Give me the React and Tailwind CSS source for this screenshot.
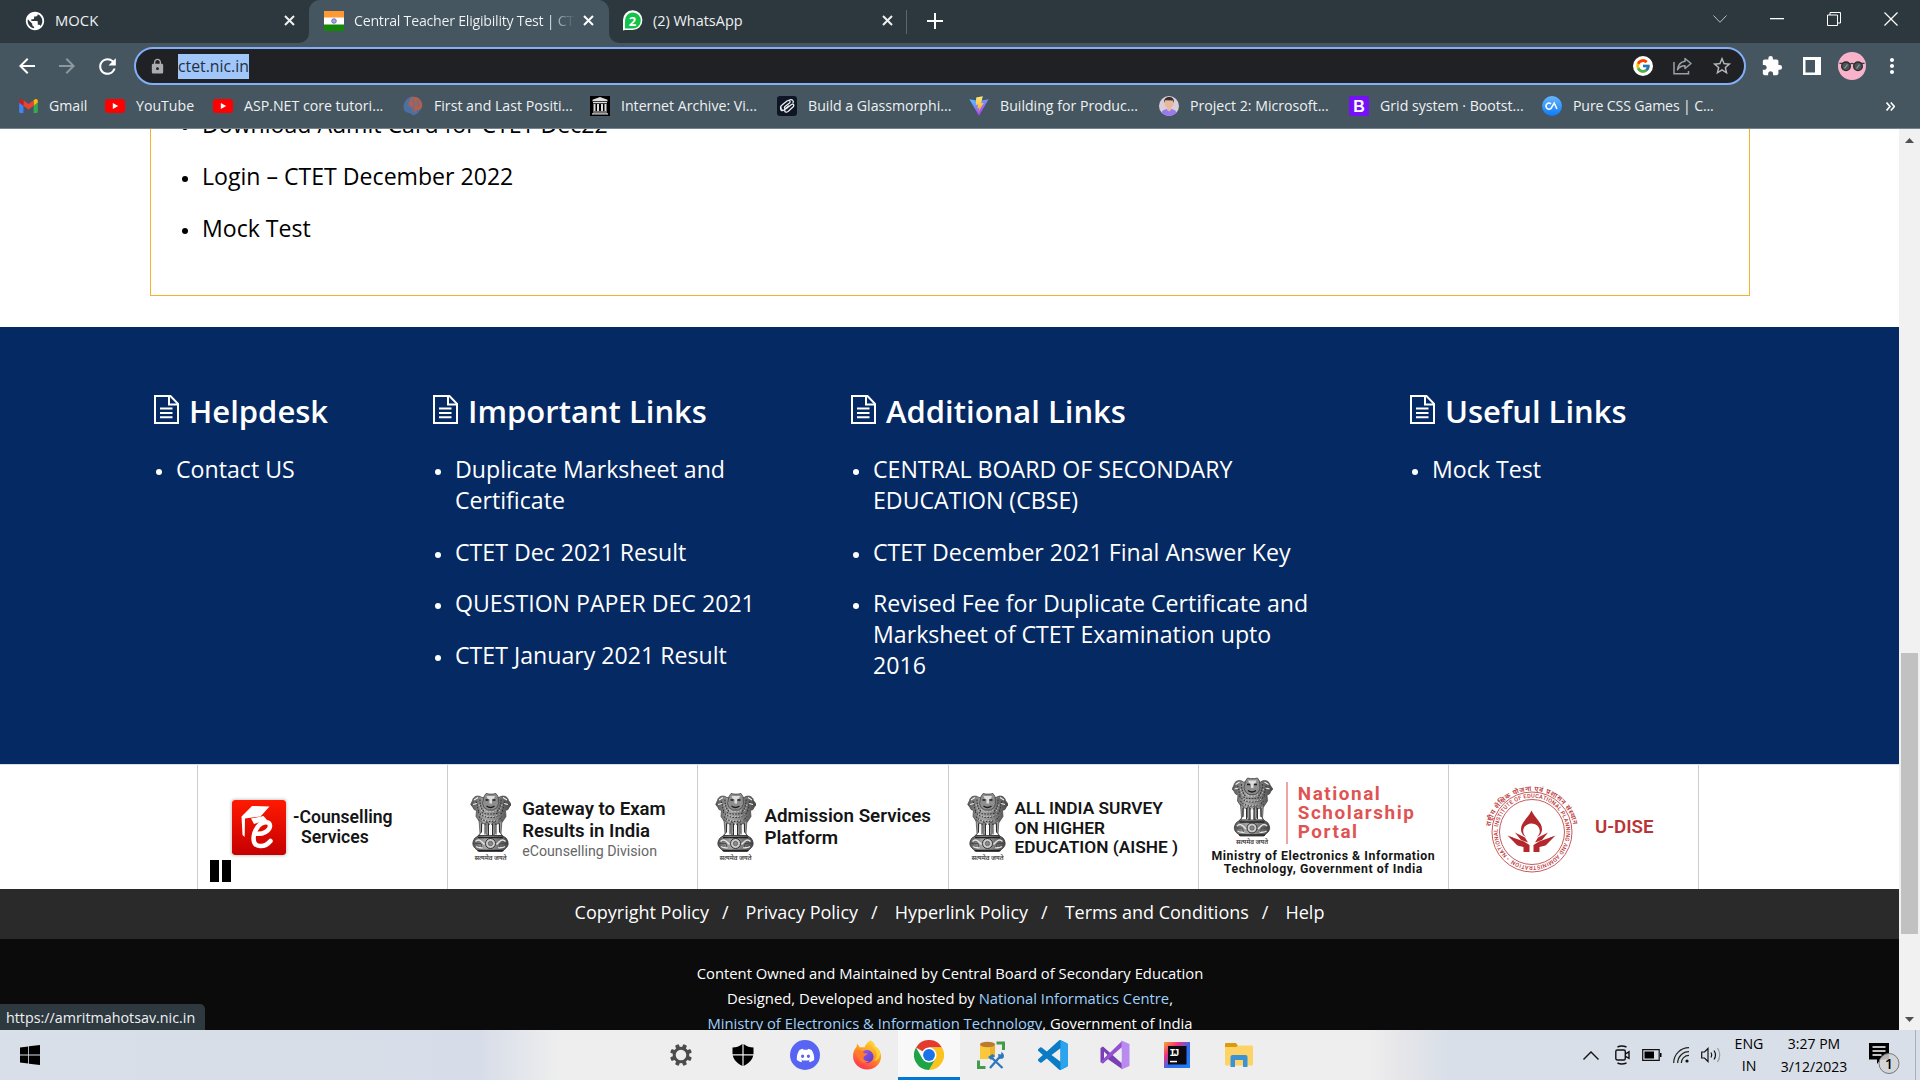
import { useId } from "react";
import { MdArrowBack, MdArrowForward, MdExtension, MdLock, MdMoreVert, MdPublic, MdRefresh, MdStarBorder } from "react-icons/md";
import { FcGoogle } from "react-icons/fc";
import { FaDiscord } from "react-icons/fa";

/* ---------- browser icons ---------- */

const Cross = ({ className = "size-[11px]" }) => (
  <svg viewBox="0 0 11 11" className={className} stroke="currentColor" strokeWidth="2" fill="none">
    <path d="M1 1l9 9M10 1l-9 9" />
  </svg>
);

const FlagIcon = () => (
  <svg viewBox="0 0 20 20" className="size-5">
    <path fill="#ff9933" d="M0 0h20v7H0z" />
    <path fill="#fff" d="M0 6.500h20V14H0z" />
    <path fill="#138808" d="M0 13.500h20V20H0z" />
    <circle cx="10" cy="10" r="2.300" fill="#aaaadd" stroke="#5a5ab4" strokeWidth=".8" />
  </svg>
);

const WhatsAppIcon = () => (
  <svg viewBox="0 0 21 21" className="size-[21px]">
    <path fill="#fff" d="M1 20.500V10.500A9.700 9.900 0 1 1 10.500 20H3z" />
    <path fill="#14c24a" d="M3 18.500V10.500A7.900 8 0 1 1 10.500 18.500z" />
    <text x="10.500" y="15.500" textAnchor="middle" fontFamily="Open Sans" fontWeight="700" fontSize="13" fill="#fff">2</text>
  </svg>
);

const GmailIcon = () => (
  <svg viewBox="52 42 88 66" className="h-[14px] w-[19px]">
    <path fill="#4285f4" d="M58 108h14V74L52 59v43c0 3.320 2.690 6 6 6" />
    <path fill="#34a853" d="M120 108h14c3.320 0 6-2.690 6-6V59l-20 15" />
    <path fill="#fbbc04" d="M120 48v26l20-15v-8c0-7.420-8.470-11.650-14.400-7.200" />
    <path fill="#ea4335" d="M72 74V48l24 18 24-18v26L96 92" />
    <path fill="#c5221f" d="M52 51v8l20 15V48l-5.600-4.200c-5.940-4.450-14.400-.22-14.400 7.200" />
  </svg>
);

const YouTubeIcon = () => (
  <svg viewBox="0 0 20 14" className="h-[14px] w-5">
    <rect width="20" height="14" rx="3" fill="#f00" />
    <path fill="#fff" d="M7.800 4l5.400 3-5.400 3z" />
  </svg>
);

const BrainIcon = () => (
  <svg viewBox="0 0 20 20" className="size-5">
    <path fill="#4a6fa0" d="M9 .5C5 1 1 5 .5 10s3 7 6 7l4 2.500 4-2 3-4 .5-7L15 2z" />
    <path fill="#b0604f" d="M8 1.500c4-2.500 10 1 11 5.500.8 4-.5 7-4 7-3 0-1 3-4 2-2.500-1-1-4-3-5S5 9 6 6z" />
    <path fill="none" stroke="#5f6f9c" strokeWidth="1.200" d="M10 2c-2 4 4 4 1 8s3 5 1 8M15 4c-2 2 2 4 0 6M4 6c3 1 0 4 2 6" />
  </svg>
);

const ArchiveIcon = () => (
  <svg viewBox="0 0 20 20" className="size-5">
    <path d="M0 0h20v20H0z" fill="#000" />
    <path fill="#ddd" d="M10 1l7.500 2.800v1.400h-15V3.800zM3 6h14v1.200H3zM3.500 8h2v7h-2zM7 8h2v7H7zM11 8h2v7h-2zM14.500 8h2v7h-2zM3 15.500h14v1H3zM2 17.200h16v1.300H2z" />
  </svg>
);

const KnotIcon = () => (
  <svg viewBox="0 0 20 20" className="size-5">
    <rect width="20" height="20" rx="3" fill="#0e1626" />
    <g fill="none" stroke="#eceef2" strokeWidth="1.300" strokeLinecap="round" strokeLinejoin="round">
      <path d="M5 13.500c-2.500-1.500-1.500-3.500 0-4.500l5-4c2.500-1.500 4 .5 2.500 2L8 10.500c-1.500 1.500.5 3 2 1.500l4.500-3.500c1.500-1 3 .5 2 2L11 15.500c-2 1.500-4 0-3-1.500" />
      <path d="M12.500 4c3-1 4.500 1 3.500 3M4 11c-1.500 3 1 4.500 3 3l4.500-4" />
    </g>
  </svg>
);

const ViteIcon = () => (
  <svg viewBox="0 0 20 20" className="size-5">
    <defs>
      <linearGradient id="vite" x1="0" y1="0" x2=".6" y2="1"><stop stopColor="#41d1ff" /><stop offset="1" stopColor="#bd34fe" /></linearGradient>
      <linearGradient id="bolt" x1="0" y1="0" x2="0" y2="1"><stop stopColor="#ffea83" /><stop offset="1" stopColor="#ffa800" /></linearGradient>
    </defs>
    <path fill="url(#vite)" d="M.4 3.200l9.600 16.500 9.600-16.500-9.600 1.800z" />
    <path fill="url(#bolt)" d="M13.800.3L7.200 1.600 6.800 9l2.400-.4-.9 4 2.100-.6-1.300 4.500L14.600 7l-2.500.3z" />
  </svg>
);

const PersonIcon = () => (
  <svg viewBox="0 0 20 20" className="size-5">
    <clipPath id="person"><circle cx="10" cy="10" r="10" /></clipPath>
    <g clipPath="url(#person)">
      <path fill="#d9cfd8" d="M0 0h20v20H0z" />
      <path fill="#9a78f0" d="M2 20c0-6 3-7 8-7s8 1 8 7z" />
      <circle cx="10" cy="7.500" r="4.500" fill="#e8b89c" />
      <path fill="#3d2f33" d="M5.200 7C4.500 2 8 .8 11 1s4.500 3 3.800 6l-1-2.500-7.500-.3z" />
      <path fill="#e8b89c" d="M8 11h4v3l-2 1.500L8 14z" />
    </g>
  </svg>
);

const BootstrapIcon = () => (
  <svg viewBox="0 0 20 20" className="size-5">
    <rect width="20" height="20" rx="2" fill="#7611f7" />
    <text x="10" y="15.700" textAnchor="middle" fontFamily="Liberation Sans" fontWeight="700" fontSize="16" fill="#fff">B</text>
  </svg>
);

const CodingArtistIcon = () => (
  <svg viewBox="0 0 20 20" className="size-5">
    <linearGradient id="cag" x1="0" y1="0" x2="0" y2="1"><stop stopColor="#6ab6fb" /><stop offset="1" stopColor="#0b7bfa" /></linearGradient>
    <circle cx="10" cy="10" r="10" fill="url(#cag)" />
    <path fill="none" stroke="#fff" strokeWidth="1.500" d="M9 7.800a3 3 0 1 0 0 4.600L12.200 7l2.800 6" />
  </svg>
);

const ShareIcon = () => (
  <svg viewBox="0 0 19 18" className="h-[18px] w-[19px]" fill="none" stroke="#9aa0a6" strokeWidth="1.500">
    <path d="M1 5v11.800h14.500V14" />
    <path strokeLinejoin="round" d="M12 1.500l6 5-6 5V8.800c-4 0-6 1.200-7.500 4C5 8.500 7.500 5 12 4.300z" />
  </svg>
);

const AvatarIcon = () => (
  <svg viewBox="0 0 28 28" className="size-7">
    <circle cx="14" cy="14" r="14" fill="#f8b3cb" />
    <path fill="none" stroke="#3a3a3a" strokeWidth="1.300" d="M1.500 11.300h4M22.500 11.300h4M12 12.200q2-1.500 4 0" />
    <circle cx="8" cy="14.300" r="4.300" fill="#4a5558" stroke="#2c2c2c" strokeWidth="1.400" />
    <circle cx="20" cy="14.300" r="4.300" fill="#4a5558" stroke="#2c2c2c" strokeWidth="1.400" />
    <path stroke="#93a0a3" strokeWidth="1.200" d="M6.500 16.500l3-4M18.500 16.500l3-4" />
  </svg>
);

/* ---------- page artwork ---------- */

const FileIcon = () => (
  <svg viewBox="0 0 25 29" className="h-[29px] w-[25px] shrink-0" fill="none" stroke="#fff" strokeWidth="2">
    <path d="M1 1h15.500L24 8.800V28H1z" />
    <path d="M15 1v8.500h9" />
    <path d="M6 13.500h12.500M6 18h12.500M6 22.300h12.500" />
  </svg>
);

const Emblem = ({ className }) => {
  const id = useId();
  return (
    <svg viewBox="0 0 41 68" className={className}>
      <linearGradient id={id} x1="0" x2="1" y1="0" y2="0">
        <stop stopColor="#555" /><stop offset=".35" stopColor="#a5a5a5" /><stop offset=".6" stopColor="#8a8a8a" /><stop offset="1" stopColor="#444" />
      </linearGradient>
      {/* side lions */}
      <path fill={`url(#${id})`} stroke="#444" strokeWidth=".7" d="M12 5C8 2 3 4 2.500 8L.7 12l2 2.500L4 17l2.500 1L6 24l4 6 6 2h10l6-2 4-6-.5-6 2.500-1 1.300-2.500 2-2.500L38.500 8C38 4 33 2 29 5z" />
      {/* front lion */}
      <path fill="#8e8e8e" stroke="#444" strokeWidth=".8" d="M14 4l2-3 3 .6h4L26 1l2 3 .5 7-1.500 4-3.500 2.500h-6L14 15l-1.500-4z" />
      <path fill="#ddd" d="M16.500 3.500h8.500l-1 2.500-2 1v4h-2.500V7l-2-1z" />
      <path stroke="#1d1d1d" strokeWidth="1.400" fill="none" d="M15.500 7.500h3M22.500 7.500h3M16.500 13.500q4 3 8 0" />
      <path stroke="#f0f0f0" strokeWidth="1.100" fill="none" d="M4 7.500l4-2.500M37 7.500L33 5M3 12l4-1M38 12l-4-1" />
      <path stroke="#333" strokeWidth="1.100" fill="none" strokeDasharray="1.600 1.200" d="M6 9c2 3 1 7 3 10M35 9c-2 3-1 7-3 10M10 7c0 5 1 9 4 12M31 7c0 5-1 9-4 12M8 19c3 4 7 6 12.500 6S30 23 33 19M9 24c3 4 7 5 11.500 5s9-1 11.500-5M12 20c3 2 14 2 17 0" />
      <path stroke="#ddd" strokeWidth=".8" fill="none" strokeDasharray="1.300 1.700" d="M9 12c1 4 2 6 4 8M32 12c-1 4-2 6-4 8M11 22c4 3 14 3 19 0M12 27c4 2 13 2 17 0M14 17c3 3 10 3 13 0" />
      {/* legs */}
      <path fill="#9b9b9b" stroke="#444" strokeWidth=".7" d="M9 27l3 3-.5 9-2.500 4h8l-1-3V30h2l.5 10-.5 4h5l-.5-4 .5-10h2v10l-1 3h8l-2.500-4-.5-9 3-3-1 14 2.500 4h-27L10 41z" />
      <path stroke="#2e2e2e" strokeWidth="1" fill="none" d="M11.500 31v9M15 31v11M18.500 31v12M22.500 31v12M26 31v11M29.500 31v9" />
      <path stroke="#f4f4f4" strokeWidth="1.200" fill="none" d="M13.300 32v8M20.500 31v11M27.800 32v8" />
      {/* abacus */}
      <path fill={`url(#${id})`} stroke="#333" strokeWidth=".8" d="M9 43h23l4 2.500c3 4 3 8-1 11L32 59H9l-3-2.500c-4-3-4-7-1-11z" />
      <circle cx="20.500" cy="51" r="5" fill="#ccc" stroke="#333" strokeWidth="1" />
      <circle cx="20.500" cy="51" r="2.200" fill="#888" stroke="#444" strokeWidth=".6" />
      <path stroke="#e4e4e4" strokeWidth="1.500" fill="none" d="M5.500 49q3-3 6 0t3 3M35.500 49q-3-3-6 0t-3 3M6 54q3 2 7 1M35 54q-3 2-7 1" />
      <path stroke="#222" strokeWidth="1.500" fill="none" d="M7.500 58h26M8 45h25" />
      <path stroke="#444" strokeWidth=".8" fill="none" d="M4 51h7l1 4M37 51h-7l-1 4" />
      <text x="20.500" y="67" textAnchor="middle" fontFamily="Noto Sans, sans-serif" fontWeight="600" fontSize="6.400" fill="#333" textLength="32">सत्यमेव जयते</text>
    </svg>
  );
};

const CounsellingLogo = () => (
  <svg viewBox="0 0 54 55" className="h-[55px] w-[54px] rounded-[3px] shadow-[0_0_3px_1px_#ccc]">
    <linearGradient id="ered" x1="0" y1="0" x2="0" y2="1"><stop stopColor="#ff1a00" /><stop offset="1" stopColor="#c50000" /></linearGradient>
    <rect width="54" height="55" rx="2.500" fill="url(#ered)" />
    <path fill="#fff" d="M9.500 16.500L20 6l17.500.5-9 10-15.500 2-.3 18.500-2.200-2z" />
    <path fill="#fff" d="M19 18.500l12.500-2.500 3.500 4-13 4z" />
    <path fill="none" stroke="#fff" strokeWidth="4.500" strokeLinecap="round" d="M23.500 33.500c7 1.500 15-3 14.500-8-.5-4.500-8-4.500-12 1-5.500 7-7 19 2 19.500 4.500.3 8-2 10.500-5" />
  </svg>
);

const SealLogo = () => (
  <svg viewBox="0 0 100 100" className="size-[100px]">
    <defs>
      <path id="sealOuter" d="M8.500 50.500A42 42 0 0 1 91.500 50.500" />
      <path id="sealInner" d="M28 82A34.200 34.200 0 1 1 72 82A34.200 34.200 0 0 1 28 82" />
    </defs>
    <g fill="none" stroke="#c9595c" strokeWidth="1">
      <circle cx="50" cy="56" r="40" />
      <circle cx="50" cy="56" r="32.500" />
    </g>
    <text fontFamily="Noto Sans, sans-serif" fontWeight="600" fontSize="6.800" fill="#b93437">
      <textPath href="#sealOuter" textLength="117">राष्ट्रीय शैक्षिक योजना एवं प्रशासन संस्थान</textPath>
    </text>
    <text fontFamily="Roboto, sans-serif" fontWeight="500" fontSize="5.600" fill="#b93437">
      <textPath href="#sealInner" textLength="211">• NATIONAL INSTITUTE OF EDUCATIONAL PLANNING AND ADMINISTRATION</textPath>
    </text>
    <g fill="#b3282d">
      <path fillRule="evenodd" d="M49.500 34.500c3 7 10.500 12 10.500 18.500 0 3-1 4.500-2 6l-3 2c2-2 2.800-3.500 2.800-6 0-4.500-4-7.500-8.300-7.500s-8.300 3-8.300 7.500c0 2.500.8 4 2.800 6l-3-2c-1-1.500-2-3-2-6 0-6.500 7.500-11.500 10.500-18.500z" />
      <path d="M28 60.500l14 5 5.500 3.500V76h-6v-5l-6-1.500zM71 60.500l-14 5-5.500 3.500V76h6v-5l6-1.500z" />
      <path d="M25.500 59.500l5 2 8 8-4-1zM73.500 59.500l-5 2-8 8 4-1zM33 56.500l10 5 3 5-7-2.500zM66 56.500l-10 5-3 5 7-2.500z" />
    </g>
  </svg>
);

/* ---------- taskbar icons ---------- */

const WindowsIcon = () => (
  <svg viewBox="0 0 20 20" className="size-5 fill-black">
    <path d="M0 2.600l8.200-1.200V9.500H0zM9 1.300L20 0v9.500H9zM0 10.400h8.200v8.100L0 17.400zM9 10.400h11V20L9 18.700z" />
  </svg>
);

const GearIcon = () => (
  <svg viewBox="0 0 24 24" className="size-6">
    <g fill="#4c4c4c">
      {[22.5, 67.5, 112.5, 157.5].map((a) => (
        <rect key={a} x="10" y="1" width="4" height="22" rx="1" transform={`rotate(${a} 12 12)`} />
      ))}
    </g>
    <circle cx="12" cy="12" r="6.800" fill="#eeeeee" stroke="#4c4c4c" strokeWidth="3" />
  </svg>
);

const ShieldIcon = () => (
  <svg viewBox="0 0 22 22" className="size-[22px] fill-black">
    <path d="M10.400 0v10.200H.5V3.500C4 3.500 7.500 2.500 10.400 0zM11.600 0v10.200h9.900V3.500C18 3.500 14.500 2.500 11.600 0zM.8 11.400h9.600V22C5.500 19.500 1.800 16 .8 11.400zM21.200 11.400h-9.600V22c4.900-2.500 8.600-6 9.600-10.600z" />
  </svg>
);

const DiscordIcon = () => (
  <span className="flex size-[30px] items-center justify-center rounded-full bg-[#5865f2] text-[19px] text-white"><FaDiscord /></span>
);

const FirefoxIcon = () => (
  <svg viewBox="0 0 30 30" className="size-[30px]">
    <defs>
      <linearGradient id="ffa" x1=".8" y1="0" x2=".3" y2="1"><stop stopColor="#ffe13a" /><stop offset=".45" stopColor="#ff9a1f" /><stop offset="1" stopColor="#ff2d55" /></linearGradient>
      <linearGradient id="ffb" x1="0" y1="0" x2="1" y2="1"><stop stopColor="#9059ff" /><stop offset="1" stopColor="#5b3bc4" /></linearGradient>
    </defs>
    <path fill="url(#ffa)" d="M18.500.5c4 2.500 4.500 5 4.500 6 3 1 6.500 6 6 11C28.300 25 22 29.500 15 29.500S1 24 1 16c0-4 1.500-7 3.500-9L5 3.500l3 4c1.500-.5 3-.5 4.500 0 1-3 3-5.500 6-7z" />
    <circle cx="15" cy="16.500" r="6.500" fill="url(#ffb)" />
    <path fill="#ff7a2a" d="M3 12c4-3 7-2 8.500.5 1 1.500 3.500.5 4 1-1 2-3.500 2-4 4s2 4 5.500 3.500c-4 3.500-9 1.500-10-2.500C5.500 16 4 15 3 12z" />
    <path fill="#ffd23a" d="M18.500.5c-1.500 5 4.500 6 6 11.500 1 4-.5 7-2.500 9 5-1 7.500-6 5.500-10.500-1-2-2.500-3.300-4.500-4C23 5 22.500 3 18.500.5z" />
  </svg>
);

const ChromeIcon = () => (
  <svg viewBox="0 0 48 48" className="size-[30px]">
    <path fill="#e33b2e" d="M24 24L3.200 12A24 24 0 0 1 44.800 12H24z" />
    <path fill="#fcc31e" d="M24 24V12h20.800A24 24 0 0 1 24 48l10.400-18z" />
    <path fill="#1ea446" d="M24 24l10.400 6L24 48A24 24 0 0 1 3.200 12l10.400 18z" />
    <circle cx="24" cy="24" r="12" fill="#fff" />
    <circle cx="24" cy="24" r="9.500" fill="#1a73e8" />
  </svg>
);

const DatabaseToolIcon = () => (
  <svg viewBox="0 0 28 28" className="size-7">
    <path fill="#fbc83a" d="M3 3.500h15v14.500H3z" />
    <path fill="#eeb22b" d="M13 4h5v14h-5z" />
    <ellipse cx="10.500" cy="3.500" rx="7.500" ry="2.700" fill="#b97a34" />
    <path fill="none" stroke="#469a4b" strokeWidth="3" d="M19.500 2H26.500v7M1.500 19.500v7h7" />
    <path fill="none" stroke="#eee" strokeWidth="4.500" d="M14.500 16l10 10M23.500 15L13.500 26.500" />
    <path fill="none" stroke="#2b78bd" strokeWidth="2.300" d="M14 16l11.500 11M23.500 15L13 27" />
    <path fill="#2b78bd" d="M11 16l4.500-3 2.500 2-4 4zM21 13l3 .5.500-2.500c3 2 3 5 1.500 6.500l-4 .5z" />
  </svg>
);

const VSCodeIcon = () => (
  <svg viewBox="0 0 24 24" className="size-[30px]">
    <path fill="#0a7bc4" d="M23.150 2.587L18.210.21a1.494 1.494 0 0 0-1.705.29l-9.460 8.630-4.120-3.128a.999.999 0 0 0-1.276.057L.327 7.261A1 1 0 0 0 .326 8.740L3.899 12 .326 15.260a1 1 0 0 0 .001 1.479L1.650 17.940a.999.999 0 0 0 1.276.057l4.120-3.128 9.460 8.630a1.492 1.492 0 0 0 1.704.29l4.942-2.377A1.500 1.500 0 0 0 24 20.060V3.939a1.500 1.500 0 0 0-.85-1.352zm-5.146 14.861L10.826 12l7.178-5.448v10.896z" />
    <path fill="#2ba3ee" d="M18 .1l5.150 2.487A1.500 1.500 0 0 1 24 3.940v16.120a1.500 1.500 0 0 1-.85 1.352L18 23.900z" />
  </svg>
);

const VisualStudioIcon = () => (
  <svg viewBox="0 0 30 30" className="size-[30px]">
    <path fill="#7a3fb5" d="M.5 8L3 6.500l19 17V29L7 18.500 3 23.500.500 22zm3.500 3.500v7L7.500 15z" fillRule="evenodd" />
    <path fill="#9350d0" d="M22 1v6L3 23.500.5 22 22 1z" />
    <path fill="#b98af0" d="M21.500.5L29.500 4v22l-8 3.500z" />
    <path fill="#eee" d="M21.500 9v12l-7-6z" />
  </svg>
);

const IntelliJIcon = () => (
  <svg viewBox="0 0 26 26" className="size-[26px]">
    <linearGradient id="ij" x1="0" y1="0" x2="1" y2="1"><stop stopColor="#f7a82c" /><stop offset=".3" stopColor="#f0307e" /><stop offset=".55" stopColor="#2f6df0" /><stop offset="1" stopColor="#1e7df5" /></linearGradient>
    <path fill="url(#ij)" d="M0 0h26v26H0z" />
    <path fill="#0a0a10" d="M4 4h18.500v18.500H4z" />
    <text x="5.500" y="13.500" fontFamily="Liberation Mono" fontWeight="700" fontSize="10" fill="#fff" textLength="10">IJ</text>
    <path fill="#fff" d="M6 18.800h7v1.500H6z" />
  </svg>
);

const FolderIcon = () => (
  <svg viewBox="0 0 28 24" className="h-6 w-7">
    <path fill="#dc9a0d" d="M0 1q0-1 1-1h10l2 3-3 2H0z" />
    <path fill="#fdd366" d="M0 4h12l2-1.500h13q1 0 1 1V21q0 1.500-1.500 1.500h-25Q0 22.500 0 21z" />
    <path fill="#3b92d6" d="M5.500 14q0-2 2-2h13q2 0 2 2v10H18v-7h-8v7H5.500z" />
  </svg>
);

const BellIcon = () => (
  <svg viewBox="0 0 32 34" className="h-[34px] w-8">
    <path fill="#000" d="M0 1h20v16.500h-8.500L8 22v-4.500H0z" />
    <path stroke="#fff" strokeWidth="1.300" d="M3.500 5h13M3.500 9h13M3.500 13h9" />
    <circle cx="20" cy="21.500" r="10" fill="#d4d4d6" fillOpacity=".85" stroke="#777" strokeWidth="1" />
    <text x="20" y="26.500" textAnchor="middle" fontFamily="Open Sans" fontWeight="600" fontSize="14" fill="#000">1</text>
  </svg>
);

/* ---------- data ---------- */

const bookmarks = [
  { icon: <GmailIcon />, label: "Gmail", w: "w-[87px]" },
  { icon: <YouTubeIcon />, label: "YouTube", w: "w-[108px]" },
  { icon: <YouTubeIcon />, label: "ASP.NET core tutori...", w: "w-[190px]" },
  { icon: <BrainIcon />, label: "First and Last Positi...", w: "w-[187px]" },
  { icon: <ArchiveIcon />, label: "Internet Archive: Vi...", w: "w-[187px]" },
  { icon: <KnotIcon />, label: "Build a Glassmorphi...", w: "w-[192px]" },
  { icon: <ViteIcon />, label: "Building for Produc...", w: "w-[190px]" },
  { icon: <PersonIcon />, label: "Project 2: Microsoft...", w: "w-[190px]" },
  { icon: <BootstrapIcon />, label: "Grid system · Bootst...", w: "w-[193px]" },
  { icon: <CodingArtistIcon />, label: "Pure CSS Games | C...", w: "w-[190px] tracking-[-0.150px]" },
];

const columns = [
  { title: "Helpdesk", w: "w-[279px]", listW: "w-[240px]", links: ["Contact US"] },
  {
    title: "Important Links", w: "w-[418px]", listW: "w-[330px]",
    links: ["Duplicate Marksheet and Certificate", "CTET Dec 2021 Result", "QUESTION PAPER DEC 2021", "CTET January 2021 Result"],
  },
  {
    title: "Additional Links", w: "w-[559px]", listW: "w-[468px]",
    links: ["CENTRAL BOARD OF SECONDARY EDUCATION (CBSE)", "CTET December 2021 Final Answer Key", "Revised Fee for Duplicate Certificate and Marksheet of CTET Examination upto 2016"],
  },
  { title: "Useful Links", w: "w-[300px]", listW: "w-[240px]", links: ["Mock Test"] },
];

const policies = ["Copyright Policy", "Privacy Policy", "Hyperlink Policy", "Terms and Conditions", "Help"];

const taskbarIcons = [GearIcon, ShieldIcon, DiscordIcon, FirefoxIcon, ChromeIcon, DatabaseToolIcon, VSCodeIcon, VisualStudioIcon, IntelliJIcon, FolderIcon];

/* ---------- browser chrome ---------- */

function TabStrip() {
  return (
    <div className="flex h-[43px] bg-[#2d383e] text-[14.200px] text-[#eef1f2]">
      <div className="flex h-[41px] w-[309px] items-center pr-[14px] pl-6">
        <MdPublic className="size-[22px] text-white" />
        <span className="ml-[9px] flex-1 text-[14.800px]">MOCK</span>
        <Cross />
      </div>
      <div className="relative flex h-[43px] w-[300px] items-center rounded-t-[11px] bg-[#455660] pr-[15px] pb-[2px] pl-[15px]">
        <svg viewBox="0 0 10 10" className="absolute bottom-0 -left-[10px] size-[10px] fill-[#455660]"><path d="M10 0v10H0A10 10 0 0 0 10 0" /></svg>
        <svg viewBox="0 0 10 10" className="absolute -right-[10px] bottom-0 size-[10px] fill-[#455660]"><path d="M0 0v10h10A10 10 0 0 1 0 0" /></svg>
        <FlagIcon />
        <span className="ml-[10px] w-[221px] overflow-hidden bg-linear-to-r from-[#f3f5f6] from-88% to-[#455660] bg-clip-text tracking-[-0.250px] whitespace-nowrap text-transparent">
          Central Teacher Eligibility Test | CTET
        </span>
        <Cross className="ml-auto size-[11px] text-white" />
      </div>
      <div className="flex h-[41px] w-[297px] items-center pr-[13px] pl-[13px]">
        <WhatsAppIcon />
        <span className="ml-[10px] flex-1 text-[14.450px]">(2) WhatsApp</span>
        <Cross />
      </div>
      <div className="mt-[10px] h-6 w-px bg-[#5c666b]" />
      <svg viewBox="0 0 16 16" className="mt-[13px] ml-[20px] size-4" stroke="#fff" strokeWidth="2"><path d="M8 0v16M0 8h16" /></svg>
      <div className="ml-auto flex h-[37px] items-center gap-[43px] pr-[22px]">
        <svg viewBox="0 0 14 8" className="h-2 w-[14px]" fill="none" stroke="#b9bfc2"><path d="M.5.5L7 7.300 13.500.5" /></svg>
        <svg viewBox="0 0 14 2" className="h-[2px] w-[14px]"><path fill="#fff" d="M0 0h14v1.300H0z" /></svg>
        <svg viewBox="0 0 14 14" className="size-[14px]" fill="none" stroke="#fff"><path d="M.5 3h10v10.500H.5zM3 3V.5h10.500V11H11" /></svg>
        <svg viewBox="0 0 14 14" className="size-[14px]" fill="none" stroke="#fff" strokeWidth="1.200"><path d="M.5.5l13 13M13.500.5l-13 13" /></svg>
      </div>
    </div>
  );
}

function Toolbar() {
  return (
    <div className="flex h-[46px] items-center bg-[#455660]">
      <MdArrowBack className="ml-[15px] size-6 text-white" />
      <MdArrowForward className="ml-4 size-6 text-[#8d989e]" />
      <MdRefresh className="ml-4 size-[25px] text-white" />
      <div className="ml-[14px] flex h-[38px] w-[1612px] items-center rounded-full border-[2.500px] border-[#83aef8] bg-[#202124]">
        <MdLock className="ml-[13px] size-[17px] text-[#a9adb1]" />
        <span className="ml-[12px] h-[25px] w-[71px] bg-[#a1c6fa] text-[15.800px] leading-[25px] whitespace-nowrap text-[#24303d]">ctet.nic.in</span>
        <span className="ml-auto flex size-5 items-center justify-center rounded-full bg-white text-[16px]"><FcGoogle /></span>
        <span className="ml-[20px]"><ShareIcon /></span>
        <MdStarBorder className="mr-[11px] ml-[19px] size-[22px] text-[#b3b8bb]" />
      </div>
      <MdExtension className="ml-[15px] size-[22px] text-white" />
      <svg viewBox="0 0 18 18" className="ml-[20px] size-[18px]"><path fill="#fff" fillRule="evenodd" d="M0 0h18v18H0zM2.500 3v12.500H12V3z" /></svg>
      <span className="ml-[17px]"><AvatarIcon /></span>
      <MdMoreVert className="ml-[14px] size-6 text-white" />
    </div>
  );
}

function Bookmarks() {
  return (
    <div className="flex h-10 items-center border-b border-[#76858c] bg-[#455660] pb-[5px] pl-[18px] text-[14.150px] text-[#eef1f2]">
      {bookmarks.map((b) => (
        <div key={b.label} className={`${b.w} flex shrink-0 items-center gap-[11px] whitespace-nowrap`}>
          <span className="flex w-5 shrink-0 justify-center">{b.icon}</span>
          {b.label}
        </div>
      ))}
      <svg viewBox="0 0 9 9" className="mr-[25px] ml-auto size-[9px]" fill="none" stroke="#fff" strokeWidth="1.600"><path d="M.5.5l3.500 4-3.500 4M4.800.5l3.500 4-3.500 4" /></svg>
    </div>
  );
}

/* ---------- web page ---------- */

function Announcements() {
  return (
    <div className="h-[198px] bg-white">
      <ul className="ml-[150px] h-[167px] w-[1600px] overflow-hidden border-x border-b border-[#f5b02f] pl-[31px] text-[23.100px] leading-[31px] text-black">
        {["Download Admit Card for CTET Dec22", "Login – CTET December 2022", "Mock Test"].map((t, i) => (
          <li key={t} className={i === 0 ? "-mt-[20px] mb-[21px] flex items-center" : "mb-[21px] flex items-center"}>
            <span className="mt-[5px] mr-[14px] size-[6px] rounded-full bg-black" />{t}
          </li>
        ))}
      </ul>
    </div>
  );
}

function LinkColumns() {
  return (
    <div className="flex h-[437px] bg-[#052962] pt-[62px] pl-[154px] text-white">
      {columns.map((c) => (
        <div key={c.title} className={`${c.w} shrink-0`}>
          <h2 className="flex h-[42px] text-[31px] leading-[44px] font-semibold whitespace-nowrap">
            <span className="mt-[6px] mr-[10px]"><FileIcon /></span>{c.title}
          </h2>
          <ul className={`${c.listW} mt-[23px] text-[23.150px]`}>
            {c.links.map((l) => (
              <li key={l} className="mb-[20.600px] flex leading-[31px]">
                <span className="mt-[15px] mr-[14px] ml-[2px] size-[6px] shrink-0 rounded-full bg-white" />
                <span>{l}</span>
              </li>
            ))}
          </ul>
        </div>
      ))}
    </div>
  );
}

const Cell = ({ last, children }) => (
  <div className={last ? "flex h-full w-[251px] border-x border-[#ccc]" : "flex h-full w-[250.200px] border-l border-[#ccc]"}>{children}</div>
);

function Partners() {
  return (
    <div className="flex h-[125px] border-t border-[#d8dce4] bg-white pl-[197px] font-[Roboto] font-semibold text-[#151515]">
      <Cell>
        <div>
          <div className="mt-[35px] ml-[34px] flex">
            <CounsellingLogo />
            <p className="mt-[8px] ml-[7px] text-[17.600px] leading-[19.700px]">-Counselling<br /><span className="pl-[8px]">Services</span></p>
          </div>
          <div className="mt-[5px] ml-[12px] flex gap-[3px]"><i className="h-[22px] w-[9px] bg-black" /><i className="h-[22px] w-[9px] bg-black" /></div>
        </div>
      </Cell>
      <Cell>
        <Emblem className="mt-[27px] ml-[22px] h-[69px] w-[41px]" />
        <p className="mt-[33px] ml-[11px] text-[18.600px] leading-[22px]">Gateway to Exam<br />Results in India<br /><span className="block text-[14.200px] leading-[18px] font-normal text-[#666]">eCounselling Division</span></p>
      </Cell>
      <Cell>
        <Emblem className="mt-[27px] ml-[17px] h-[69px] w-[41px]" />
        <p className="mt-[40px] ml-[8px] text-[18.800px] leading-[22px]">Admission Services<br />Platform</p>
      </Cell>
      <Cell>
        <Emblem className="mt-[27px] ml-[18px] h-[69px] w-[41px]" />
        <p className="mt-[34px] ml-[7px] text-[17.300px] leading-[19.600px] whitespace-nowrap">ALL INDIA SURVEY<br />ON HIGHER<br />EDUCATION (AISHE )</p>
      </Cell>
      <Cell>
        <div className="w-full">
          <div className="flex h-[82px]">
            <Emblem className="mt-[12px] ml-[32px] h-[68px] w-[42px]" />
            <span className="mt-[17px] ml-[13px] h-[62px] w-[2px] bg-[#f0a3a3]" />
            <p className="mt-[20px] ml-[10px] text-[18.900px] leading-[18.900px] font-bold tracking-[1.550px] text-[#e05353]">National<br />Scholarship<br />Portal</p>
          </div>
          <p className="mt-[3px] text-center text-[12.300px] leading-[12.500px] font-bold tracking-[0.550px] whitespace-nowrap">Ministry of Electronics &amp; Information<br />Technology, Government of India</p>
        </div>
      </Cell>
      <Cell last>
        <span className="mt-[11px] ml-[33px]"><SealLogo /></span>
        <p className="mt-[51px] ml-[13px] text-[18.700px] leading-[22px] text-[#b93437]">U-DISE</p>
      </Cell>
    </div>
  );
}

function PolicyBar() {
  return (
    <div className="flex h-[50px] justify-center gap-[13px] bg-[#2a2a2a] pt-[10px] text-[18px] leading-[26px] text-white">
      {policies.map((p, i) => (
        <span key={p} className="flex gap-[17px] whitespace-nowrap">{i > 0 && <span>/</span>}{p}</span>
      ))}
    </div>
  );
}

function Credits() {
  return (
    <div className="relative h-[91px] overflow-hidden bg-[#0b0b0b] pt-[22px] pl-px text-center text-[14.800px] leading-[25px] text-white">
      <p>Content Owned and Maintained by Central Board of Secondary Education</p>
      <p>Designed, Developed and hosted by <span className="text-[#9fd0fb]">National Informatics Centre</span>,</p>
      <p><span className="text-[#9fd0fb]">Ministry of Electronics &amp; Information Technology</span>, Government of India</p>
      <div className="absolute bottom-0 left-0 h-[26px] w-[205px] rounded-tr-[5px] bg-[#2d383f] pl-[6px] text-left text-[14.300px] leading-[27px] text-[#eef1f2]">https://amritmahotsav.nic.in</div>
    </div>
  );
}

function Scrollbar() {
  return (
    <div className="flex w-[21px] flex-col items-center bg-[#f1f1f1]">
      <svg viewBox="0 0 9 5" className="mt-[9px] h-[5px] w-[9px] fill-[#505050]"><path d="M0 5L4.500 0 9 5z" /></svg>
      <div className="mt-[510px] h-[281px] w-[17px] bg-[#c1c1c1]" />
      <svg viewBox="0 0 9 5" className="mt-auto mb-[8px] h-[5px] w-[9px] fill-[#505050]"><path d="M0 0l4.500 5L9 0z" /></svg>
    </div>
  );
}

/* ---------- taskbar ---------- */

function Taskbar() {
  return (
    <div className="flex h-[50px] bg-[linear-gradient(90deg,#d8dfe8_0,#d7dde8_480px,#eeeeee_560px,#eeeeee_1370px,#e6e6ea_1400px,#d8dfe8_1450px)] text-[14px] text-black">
      <div className="flex w-[650px] items-center pl-5"><WindowsIcon /></div>
      {taskbarIcons.map((Icon, i) => (
        <div key={i} className={i === 4 ? "flex w-[62px] items-center justify-center border-b-[3px] border-[#0078d7] bg-[#f8f8f8] pt-[3px]" : "flex w-[62px] items-center justify-center"}><Icon /></div>
      ))}
      <div className="ml-auto flex items-center">
        <svg viewBox="0 0 16 9" className="h-[9px] w-4" fill="none" stroke="#111" strokeWidth="1.400"><path d="M.5 8.500L8 1l7.500 7.500" /></svg>
        <svg viewBox="0 0 16 20" className="ml-[16px] h-5 w-4" fill="none" stroke="#111" strokeWidth="1.400"><rect x=".8" y="5" width="9.500" height="10" rx="1.500" /><path d="M10.500 8.800l3.500-2v6.500l-3.500-2M2.500 2q4-2 9 0M2.500 18q4 2 9 0" /></svg>
        <svg viewBox="0 0 20 12" className="ml-[11px] h-3 w-5"><path fill="none" stroke="#111" strokeWidth="1.200" d="M.7.7h16.500v10.600H.7z" /><path fill="#000" d="M2.500 2.500h9.500v7H2.500zM18 4h1.500v4H18z" /></svg>
        <svg viewBox="0 0 16 16" className="ml-[11px] size-4" fill="none" stroke="#222" strokeWidth="1.200"><path d="M.7 16A15.300 15.300 0 0 1 16 .7M4.700 16A11.300 11.300 0 0 1 16 4.700M8.300 16A7.700 7.700 0 0 1 16 8.300" /><circle cx="14" cy="14" r="1.600" fill="#111" stroke="none" /></svg>
        <svg viewBox="0 0 20 18" className="ml-[12px] h-[18px] w-5" fill="none" stroke="#111" strokeWidth="1.200"><path d="M.7 6h2.800L7 2.500v13L3.500 12H.7z" /><path d="M10 6.500q1.500 2.500 0 5M13 4.500q3 4.500 0 9" /><path stroke="#999" d="M16.500 2q4.500 7 0 14" /></svg>
        <p className="ml-[12px] w-[32px] text-center text-[14.200px] leading-[22px]">ENG<br />IN</p>
        <p className="ml-[13px] w-[72px] pb-[1px] text-center leading-[23px]">3:27 PM<br />3/12/2023</p>
        <span className="mt-[8px] ml-[19px]"><BellIcon /></span>
        <span className="ml-[14px] h-[50px] w-px bg-[#a9b0ba]" />
        <span className="w-1" />
      </div>
    </div>
  );
}

export default function App() {
  return (
    <div className="flex h-[1080px] w-[1920px] flex-col overflow-hidden font-['Open_Sans',sans-serif]">
      <TabStrip />
      <Toolbar />
      <Bookmarks />
      <div className="flex h-[901px]">
        <main className="w-[1899px]">
          <Announcements />
          <LinkColumns />
          <Partners />
          <PolicyBar />
          <Credits />
        </main>
        <Scrollbar />
      </div>
      <Taskbar />
    </div>
  );
}
